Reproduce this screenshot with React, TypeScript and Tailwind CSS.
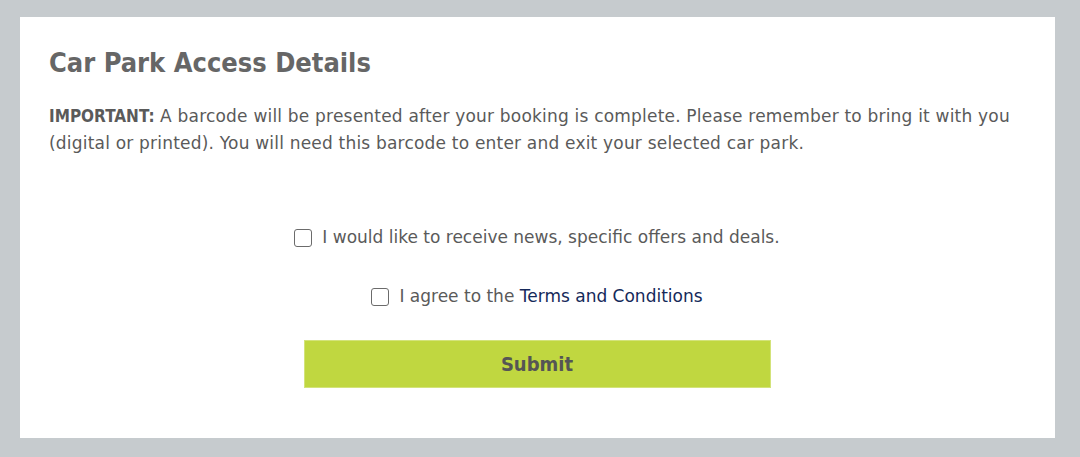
import React from "react";

export default function App() {
  return (
    <div className="w-[1080px] h-[457px] bg-[#c6cbce] pt-[17px] pl-[20px] pr-[25px]" style={{ fontFamily: '"DejaVu Sans", Tahoma, sans-serif' }}>
      <div className="bg-white h-[421px] pl-[29px] pr-[30px] pt-[28px]">
        <h1 className="text-[27px] leading-[36px] font-bold text-[#666666] font-['DejaVu_Sans_Condensed',sans-serif]">Car Park Access Details</h1>
        <p className="mt-[22px] text-[17px] leading-[27px] text-[#5a5a5a] tracking-[0.2px]">
          <span className="font-bold font-['DejaVu_Sans_Condensed',sans-serif] tracking-normal">IMPORTANT:</span> A barcode will be presented after your booking is complete. Please remember to bring it with you (digital or printed). You will need this barcode to enter and exit your selected car park.
        </p>
        <div className="flex flex-col items-center mt-[69px]">
          <label className="flex items-center gap-[10px] text-[17px] text-[#5a5a5a] h-[24px]">
            <span className="w-[18px] h-[18px] border border-[#6b6b6b] rounded-[3px] bg-white" />
            I would like to receive news, specific offers and deals.
          </label>
          <label className="flex items-center gap-[10px] text-[17px] text-[#5a5a5a] h-[24px] mt-[35px]">
            <span className="w-[18px] h-[18px] border border-[#6b6b6b] rounded-[3px] bg-white" />
            <span>I agree to the <a className="text-[#15295a]">Terms and Conditions</a></span>
          </label>
          <button className="mt-[31px] w-[467px] h-[48px] bg-[#c0d740] border border-[#d3e37a] text-[20px] font-bold text-[#555555] font-['DejaVu_Sans_Condensed',sans-serif]">Submit</button>
        </div>
      </div>
    </div>
  );
}
